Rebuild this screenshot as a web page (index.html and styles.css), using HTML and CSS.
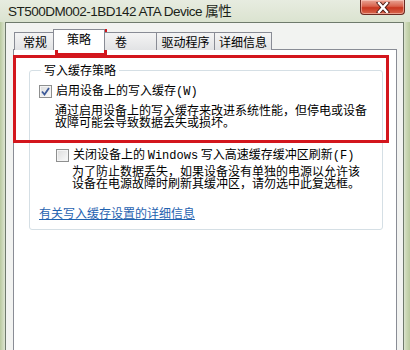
FILE: index.html
```html
<!DOCTYPE html>
<html lang="zh-CN">
<head>
    <meta charset="UTF-8">
    <meta name="viewport" content="width=device-width, initial-scale=1.0">
    <title>ST500DM002-1BD142 ATA Device 属性</title>
    <link rel="stylesheet" href="styles.css">
</head>
<body>
    <div class="window">
        <div class="titlebar">
            <span class="title">ST500DM002-1BD142 ATA Device 属性</span>
            <button class="close-btn">
                <svg width="14" height="11" viewBox="0 0 14 11">
                    <path d="M3 1 L11 10 M11 1 L3 10" stroke="#4a1a14" stroke-width="4.2" stroke-linecap="square"/>
                    <path d="M3 1 L11 10 M11 1 L3 10" stroke="#fff" stroke-width="2.4" stroke-linecap="square"/>
                </svg>
            </button>
        </div>

        <div class="client">
            <div class="tabs">
                <div class="tab tab-general">常规</div>
                <div class="tab tab-active">策略</div>
                <div class="tab tab-volume">卷</div>
                <div class="tab tab-driver">驱动程序</div>
                <div class="tab tab-details">详细信息</div>
            </div>

            <div class="panel">
                <fieldset class="group">
                    <legend>写入缓存策略</legend>

                    <label class="check-row">
                        <span class="checkbox checked">
                            <svg width="9" height="9" viewBox="0 0 9 9">
                                <path d="M1 4.5 L3.5 7.5 L8 1" fill="none" stroke="#3d5a99" stroke-width="1.8"/>
                            </svg>
                        </span>
                        <span>启用设备上的写入缓存<span class="mono">(W)</span></span>
                    </label>
                    <p class="desc">通过启用设备上的写入缓存来改进系统性能，但停电或设备<br>故障可能会导致数据丢失或损坏。</p>

                    <label class="check-row sub">
                        <span class="checkbox"></span>
                        <span>关闭设备上的 <span class="mono">Windows</span> 写入高速缓存缓冲区刷新<span class="mono">(F)</span></span>
                    </label>
                    <p class="desc sub">为了防止数据丢失，如果设备没有单独的电源以允许该<br>设备在电源故障时刷新其缓冲区，请勿选中此复选框。</p>

                    <a class="link" href="#">有关写入缓存设置的详细信息</a>
                </fieldset>
            </div>
        </div>

        <!-- 红色标注框 -->
        <div class="mark mark-tab"></div>
        <div class="mark mark-group"></div>
    </div>
</body>
</html>
```

FILE: styles.css
```css
body, html {
    margin: 0;
    padding: 0;
    width: 410px;
    height: 350px;
    overflow: hidden;
}

body {
    font-family: "Noto Sans CJK SC", "Noto Sans", sans-serif;
    font-size: 12px;
    color: #000;
}

.window {
    position: relative;
    height: 350px;
    display: flex;
    flex-direction: column;
    padding: 0 6px 0 5px;
    box-sizing: border-box;
    background: linear-gradient(to right, #b9c99f 0, #cfdabd 3px, #dde4d2 5px, #dde4d2 calc(100% - 6px), #cdd9b8 calc(100% - 4px), #b9c99f 100%);
}

.titlebar {
    height: 22px;
    display: flex;
    justify-content: space-between;
    align-items: flex-start;
    margin: 0 -6px 0 -5px;
    padding: 0 5px 0 8px;
    background: linear-gradient(to bottom, #e7ece0, #dbe3d0);
}

.title {
    font-family: "Liberation Sans", "Noto Sans CJK SC", sans-serif;
    font-size: 13.5px;
    letter-spacing: -0.5px;
    line-height: 24px;
    color: #1b1f18;
}

.close-btn {
    width: 45px;
    height: 15px;
    padding: 0;
    border: 1px solid #6b2a22;
    border-top: none;
    border-radius: 0 0 4px 4px;
    background: linear-gradient(to bottom, #e9a596 0, #d9624c 45%, #c8361f 55%, #d8684f 100%);
    display: flex;
    align-items: center;
    justify-content: center;
    box-shadow: inset 0 0 0 1px rgba(255, 220, 210, 0.5);
}

.client {
    flex: 1;
    display: flex;
    flex-direction: column;
    background: #f2f3f1;
    border: 1px solid #6f7a6c;
    border-bottom: none;
    padding: 6px 6px 0 7px;
}

.tabs {
    display: flex;
    align-items: flex-end;
    height: 21px;
    position: relative;
    z-index: 1;
    margin-bottom: -1px;
}

.tab {
    box-sizing: border-box;
    height: 18px;
    border: 1px solid #898c95;
    border-bottom: none;
    background: linear-gradient(to bottom, #f4f4f4, #e2e3e5);
    text-align: center;
    line-height: 17px;
    margin-right: -1px;
}

.tab-general {
    width: 42px;
    margin-left: 1px;
}

.tab-active {
    width: 52px;
    height: 21px;
    background: #fff;
    line-height: 18px;
    margin-left: -2px;
    margin-right: -2px;
    position: relative;
    z-index: 1;
}

.tab-volume {
    width: 54px;
    text-align: left;
    padding-left: 11px;
}

.tab-driver {
    width: 59px;
}

.tab-details {
    width: 58px;
}

.panel {
    flex: 1;
    background: #fff;
    border: 1px solid #898c95;
    border-bottom: none;
    padding: 13px 12px 0 15px;
}

.group {
    margin: 0;
    border: 1px solid #d5dfe5;
    border-radius: 3px;
    padding: 7px 8px 8px 9px;
    width: 354px;
    box-sizing: border-box;
}

.group legend {
    padding: 0 3px;
    margin-left: 2px;
    line-height: 14px;
}

.check-row {
    display: flex;
    align-items: center;
    line-height: 14px;
    height: 14px;
    white-space: pre;
}

.check-row.sub {
    margin-left: 17px;
    margin-top: 20px;
}

.checkbox {
    box-sizing: border-box;
    width: 13px;
    height: 13px;
    border: 1px solid #8e8f8f;
    background: linear-gradient(135deg, #dcdcdc, #fafafa);
    box-shadow: inset 0 0 0 1px #f4f4f4;
    margin-right: 4px;
    display: flex;
    align-items: center;
    justify-content: center;
}

.mono {
    font-family: "Liberation Mono", monospace;
    font-size: 12px;
}

.desc {
    margin: 6px 0 0 16px;
    line-height: 12px;
}

.desc.sub {
    margin: 3px 0 0 33px;
}

.link {
    display: inline-block;
    margin-top: 17px;
    line-height: 14px;
    color: #1f62b0;
}

.mark {
    position: absolute;
    border: 3px solid #d3161d;
    box-sizing: border-box;
}

.mark-tab {
    left: 55px;
    top: 29px;
    width: 52px;
    height: 27px;
}

.mark-group {
    left: 13px;
    top: 55px;
    width: 376px;
    height: 88px;
}
```
